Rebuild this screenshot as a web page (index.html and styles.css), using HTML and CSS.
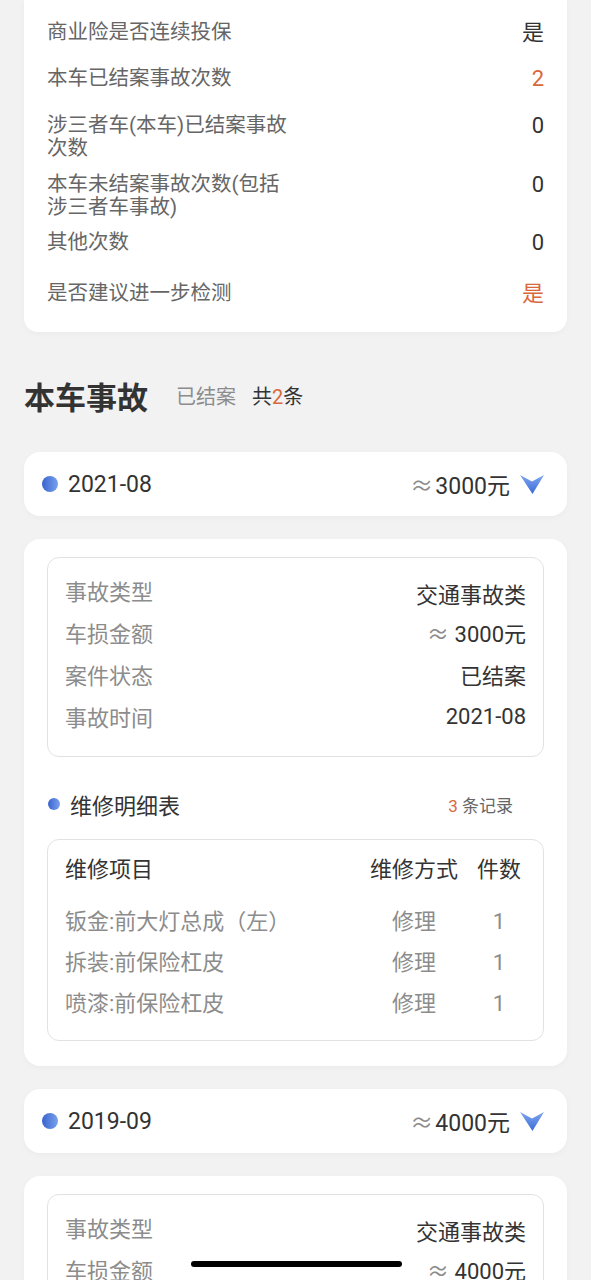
FILE: index.html
```html
<!DOCTYPE html>
<html lang="zh-CN">
<head>
    <meta charset="UTF-8">
    <meta name="viewport" content="width=device-width, initial-scale=1.0">
    <title>本车事故</title>
    <link rel="stylesheet" href="styles.css">
</head>
<body>
    <div class="page">
        <!-- Summary -->
        <section class="card summary">
            <div class="stat-row">
                <span class="stat-label">商业险是否连续投保</span>
                <span class="stat-value">是</span>
            </div>
            <div class="stat-row">
                <span class="stat-label">本车已结案事故次数</span>
                <span class="stat-value warn">2</span>
            </div>
            <div class="stat-row multi">
                <span class="stat-label">涉三者车(本车)已结案事故次数</span>
                <span class="stat-value">0</span>
            </div>
            <div class="stat-row multi">
                <span class="stat-label">本车未结案事故次数(包括涉三者车事故)</span>
                <span class="stat-value">0</span>
            </div>
            <div class="stat-row">
                <span class="stat-label">其他次数</span>
                <span class="stat-value">0</span>
            </div>
            <div class="stat-row">
                <span class="stat-label">是否建议进一步检测</span>
                <span class="stat-value warn">是</span>
            </div>
        </section>

        <!-- Accidents -->
        <div class="section-head">
            <h2 class="section-title">本车事故</h2>
            <span class="section-tag">已结案</span>
            <span class="section-count">共<em>2</em>条</span>
        </div>

        <div class="accident-list">
            <div class="card accident-head">
                <span class="dot"></span>
                <span class="accident-date">2021-08</span>
                <span class="accident-amount"><i>≈</i>3000元</span>
                <svg class="chevron" viewBox="0 0 24 19">
                    <defs>
                        <linearGradient id="chev1" x1="0" y1="0" x2="0" y2="1">
                            <stop offset="0" stop-color="#7ea6f2"/>
                            <stop offset="1" stop-color="#3c6bd4"/>
                        </linearGradient>
                    </defs>
                    <path d="M0 0 L12 6.5 L24 0 L12.5 19 Z" fill="url(#chev1)"/>
                </svg>
            </div>

            <div class="card accident-detail">
                <div class="info-box">
                    <div class="info-row type">
                        <span class="info-label">事故类型</span>
                        <span class="info-value">交通事故类</span>
                    </div>
                    <div class="info-row">
                        <span class="info-label">车损金额</span>
                        <span class="info-value"><i>≈</i> 3000元</span>
                    </div>
                    <div class="info-row">
                        <span class="info-label">案件状态</span>
                        <span class="info-value">已结案</span>
                    </div>
                    <div class="info-row">
                        <span class="info-label">事故时间</span>
                        <span class="info-value">2021-08</span>
                    </div>
                </div>

                <div class="repair-head">
                    <span class="dot small"></span>
                    <span class="repair-title">维修明细表</span>
                    <span class="repair-count"><em>3</em> 条记录</span>
                </div>

                <div class="repair-table">
                    <div class="repair-row head">
                        <span>维修项目</span>
                        <span>维修方式</span>
                        <span>件数</span>
                    </div>
                    <div class="repair-row">
                        <span>钣金:前大灯总成（左）</span>
                        <span>修理</span>
                        <span>1</span>
                    </div>
                    <div class="repair-row">
                        <span>拆装:前保险杠皮</span>
                        <span>修理</span>
                        <span>1</span>
                    </div>
                    <div class="repair-row">
                        <span>喷漆:前保险杠皮</span>
                        <span>修理</span>
                        <span>1</span>
                    </div>
                </div>
            </div>

            <div class="card accident-head">
                <span class="dot"></span>
                <span class="accident-date">2019-09</span>
                <span class="accident-amount"><i>≈</i>4000元</span>
                <svg class="chevron" viewBox="0 0 24 19">
                    <defs>
                        <linearGradient id="chev2" x1="0" y1="0" x2="0" y2="1">
                            <stop offset="0" stop-color="#7ea6f2"/>
                            <stop offset="1" stop-color="#3c6bd4"/>
                        </linearGradient>
                    </defs>
                    <path d="M0 0 L12 6.5 L24 0 L12.5 19 Z" fill="url(#chev2)"/>
                </svg>
            </div>

            <div class="card accident-detail">
                <div class="info-box">
                    <div class="info-row type">
                        <span class="info-label">事故类型</span>
                        <span class="info-value">交通事故类</span>
                    </div>
                    <div class="info-row">
                        <span class="info-label">车损金额</span>
                        <span class="info-value"><i>≈</i> 4000元</span>
                    </div>
                    <div class="info-row">
                        <span class="info-label">案件状态</span>
                        <span class="info-value">已结案</span>
                    </div>
                    <div class="info-row">
                        <span class="info-label">事故时间</span>
                        <span class="info-value">2019-09</span>
                    </div>
                </div>
            </div>
        </div>
    </div>

    <div class="home-bar"></div>
</body>
</html>
```

FILE: styles.css
```css
/* Reset */
* {
    margin: 0;
    padding: 0;
    box-sizing: border-box;
}

body {
    font-family: Roboto, "Noto Sans CJK SC", sans-serif;
    background: #f2f2f2;
    color: #333;
}

em,
i {
    font-style: normal;
}

.page {
    padding: 0 24px 40px;
}

/* Cards */
.card {
    background: #fff;
    border-radius: 16px;
    box-shadow: 0 2px 6px rgba(0, 0, 0, 0.03);
}

/* Summary */
.summary {
    border-radius: 0 0 14px 14px;
    padding: 9px 23px 16px;
}

.stat-row {
    display: grid;
    grid-template-columns: 1fr auto;
    align-items: start;
    align-content: center;
    min-height: 46px;
}

.stat-row.multi {
    margin-top: 13px;
}

.stat-row:last-child {
    margin-top: 5px;
}

.stat-label {
    max-width: 244px;
    font-size: 20.5px;
    line-height: 23px;
    color: #666;
}

.stat-value {
    font-size: 22px;
    line-height: 23px;
    color: #333;
}

.warn,
.section-count em,
.repair-count em {
    color: #d8683c;
}

/* Section heading */
.section-head {
    display: flex;
    align-items: center;
    height: 40px;
    margin: 43px 0 37px;
}

.section-title {
    font-size: 31px;
    font-weight: 700;
    color: #333;
    margin-right: 28px;
}

.section-tag {
    font-size: 20px;
    color: #8c8c8c;
    margin-right: 16px;
}

.section-count {
    font-size: 20px;
    color: #333;
}

/* Accident list */
.accident-list {
    display: flex;
    flex-direction: column;
    gap: 23px;
}

.accident-head {
    display: flex;
    align-items: center;
    height: 64px;
    padding: 0 23px 0 18px;
}

.dot {
    width: 16px;
    height: 16px;
    border-radius: 50%;
    background: linear-gradient(90deg, #3a63cf, #79a2ee);
    flex-shrink: 0;
}

.dot.small {
    width: 12px;
    height: 12px;
}

.accident-date {
    margin-left: 10px;
    font-size: 23px;
    color: #333;
    flex: 1;
}

.accident-amount {
    font-size: 23px;
    color: #333;
}

.accident-amount i,
.info-value i {
    font-family: "Noto Sans CJK SC", sans-serif;
    color: #8c8c8c;
}

.accident-amount i {
    margin-right: 2px;
}

.chevron {
    width: 24px;
    height: 19px;
    margin-left: 10px;
}

/* Accident detail */
.accident-detail {
    padding: 18px 23px 25px;
}

.info-box {
    border: 1px solid #e2e2e2;
    border-radius: 12px;
    padding: 11px 17px 19px;
}

.info-row {
    display: flex;
    justify-content: space-between;
    align-items: center;
    height: 42px;
}

.info-label {
    font-size: 22px;
    color: #8c8c8c;
}

.info-value {
    font-size: 22px;
    color: #333;
}

.info-row.type .info-value {
    align-self: flex-end;
    line-height: 30px;
}

/* Repair list */
.repair-head {
    display: flex;
    align-items: center;
    height: 30px;
    margin: 32px 0 20px;
    padding: 0 31px 0 1px;
}

.repair-title {
    margin-left: 10px;
    font-size: 22px;
    color: #333;
    flex: 1;
}

.repair-count {
    font-size: 17px;
    color: #666;
}

.repair-table {
    border: 1px solid #e2e2e2;
    border-radius: 12px;
    padding: 15px 21px 16px 17px;
}

.repair-row {
    display: grid;
    grid-template-columns: 1fr 90px 46px;
    column-gap: 17px;
    font-size: 22px;
    line-height: 41px;
    color: #8c8c8c;
}

.repair-row span:not(:first-child) {
    text-align: center;
}

.repair-row.head {
    line-height: 30px;
    color: #333;
    margin-bottom: 16px;
}

/* Phone home indicator */
.home-bar {
    position: fixed;
    left: 50%;
    bottom: 13px;
    width: 211px;
    height: 6px;
    margin-left: -105px;
    border-radius: 3px;
    background: #000;
}
```
